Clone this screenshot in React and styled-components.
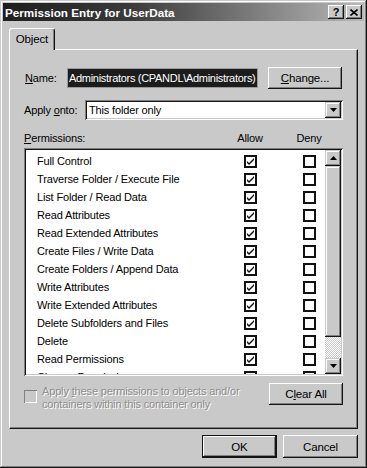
import styled, { createGlobalStyle } from 'styled-components';

const face = '#c9c9c9';
const shadow = '#808080';
const dark = '#141414';

const GlobalStyle = createGlobalStyle`
  html, body { margin: 0; padding: 0; background: ${face}; }
  body {
    font-family: "Liberation Sans", Arial, sans-serif;
    font-size: 11px;
    letter-spacing: -0.15px;
    color: #000;
  }
`;

const Window = styled.div`
  width: 367px;
  height: 468px;
  box-sizing: border-box;
  padding: 3px;
  background: ${face};
  box-shadow: inset -1px -1px ${dark}, inset 1px 1px ${face},
    inset -2px -2px ${shadow}, inset 2px 2px #fff;
  display: flex;
  flex-direction: column;
`;

const TitleBar = styled.div`
  height: 18px;
  display: flex;
  align-items: center;
  padding: 0 2px;
  background: linear-gradient(to right, #1e1e1e 0%, #3a3a3a 35%, #b8b8b8 100%);
  color: #fff;
  font-weight: bold;
  font-size: 11.7px;
  letter-spacing: 0;
`;

const TitleText = styled.div`
  flex: 1;
  white-space: nowrap;
`;

const TitleButton = styled.div`
  width: 16px;
  height: 14px;
  margin-left: ${p => (p.$gap ? 2 : 0)}px;
  box-sizing: border-box;
  background: ${face};
  box-shadow: inset -1px -1px ${dark}, inset 1px 1px #fff, inset -2px -2px ${shadow};
  display: flex;
  align-items: center;
  justify-content: center;
  color: #000;
  font-weight: bold;
  font-size: 11px;
  line-height: 1;
`;

const Body = styled.div`
  padding: 7px 6px 0 6px;
  display: flex;
  flex-direction: column;
`;

const TabStrip = styled.div`
  display: flex;
  height: 21px;
  position: relative;
  z-index: 1;
`;

const Tab = styled.div`
  width: 46px;
  height: 22px;
  box-sizing: border-box;
  background: ${face};
  border-left: 1px solid #fff;
  border-top: 1px solid #fff;
  border-right: 1px solid ${dark};
  border-radius: 3px 3px 0 0;
  box-shadow: inset -1px 0 ${shadow};
  display: flex;
  align-items: center;
  justify-content: center;
  padding-bottom: 2px;
  font-size: 11.5px;
`;

const Panel = styled.div`
  height: 380px;
  box-sizing: border-box;
  border-top: 1px solid #fff;
  border-left: 1px solid #fff;
  border-right: 1px solid ${dark};
  border-bottom: 1px solid ${dark};
  box-shadow: inset -1px -1px ${shadow};
  padding: 17px 14px 0 14px;
  display: flex;
  flex-direction: column;
`;

const Row = styled.div`
  display: flex;
  align-items: center;
  height: ${p => p.$h}px;
  margin-top: ${p => p.$mt || 0}px;
`;

const Label = styled.div`
  width: ${p => p.$w}px;
  padding-left: ${p => p.$pl || 0}px;
  box-sizing: border-box;
  white-space: nowrap;
`;

const U = styled.span`
  text-decoration: underline;
  text-underline-offset: 1px;
`;

const NameField = styled.div`
  width: 191px;
  height: 20px;
  box-sizing: border-box;
  border: 1px solid #9a9a9a;
  display: flex;
`;

const Selection = styled.div`
  flex: 1;
  background: #1c1c1c;
  color: #fff;
  display: flex;
  align-items: center;
  padding-left: 1px;
  letter-spacing: -0.3px;
  white-space: nowrap;
  overflow: hidden;
`;

const Button = styled.div`
  width: ${p => p.$w}px;
  height: ${p => p.$h}px;
  margin-left: ${p => p.$ml || 0}px;
  box-sizing: border-box;
  background: ${face};
  box-shadow: ${p =>
    p.$default
      ? `inset 0 0 0 1px ${dark}, inset -2px -2px ${dark}, inset 2px 2px #fff, inset -3px -3px ${shadow}`
      : `inset -1px -1px ${dark}, inset 1px 1px #fff, inset -2px -2px ${shadow}`};
  display: flex;
  align-items: center;
  justify-content: center;
  font-size: 11.5px;
`;

const Combo = styled.div`
  width: 258px;
  height: 20px;
  box-sizing: border-box;
  background: #fff;
  box-shadow: inset 1px 1px ${shadow}, inset -1px -1px #fff, inset 2px 2px ${dark}, inset -2px -2px ${face};
  padding: 2px;
  display: flex;
  align-items: center;
`;

const ComboText = styled.div`
  flex: 1;
  padding-left: 2px;
`;

const ArrowButton = styled.div`
  width: ${p => p.$w || 16}px;
  height: ${p => p.$h || 16}px;
  box-sizing: border-box;
  background: ${face};
  box-shadow: inset -1px -1px ${dark}, inset 1px 1px ${face}, inset -2px -2px ${shadow}, inset 2px 2px #fff;
  display: flex;
  align-items: center;
  justify-content: center;
  flex-shrink: 0;
`;

const HeaderRow = styled.div`
  display: grid;
  grid-template-columns: 192px 50px 50px;
  column-gap: 9px;
  height: 16px;
  align-items: center;
  margin-top: 10px;
`;

const Center = styled.div`
  text-align: center;
`;

const ListBox = styled.div`
  margin-top: 2px;
  height: 228px;
  box-sizing: border-box;
  background: #fff;
  box-shadow: inset 1px 1px ${shadow}, inset -1px -1px #fff, inset 2px 2px ${dark}, inset -2px -2px ${face};
  padding: 2px;
  display: flex;
`;

const ListRows = styled.div`
  flex: 1;
  padding: 2px 0 0 11px;
  overflow: hidden;
`;

const PermRow = styled.div`
  display: grid;
  grid-template-columns: 179px 50px 50px;
  column-gap: 9px;
  height: 18px;
  align-items: center;
  white-space: nowrap;
`;

const Box = styled.div`
  width: 13px;
  height: 13px;
  box-sizing: border-box;
  border: 2px solid #111;
  background: #fff;
  margin: 0 auto;
  display: flex;
  align-items: center;
  justify-content: center;
`;

const ScrollBar = styled.div`
  width: 16px;
  display: flex;
  flex-direction: column;
`;

const Thumb = styled.div`
  height: 171px;
  box-sizing: border-box;
  background: ${face};
  box-shadow: inset -1px -1px ${dark}, inset 1px 1px ${face}, inset -2px -2px ${shadow}, inset 2px 2px #fff;
`;

const Track = styled.div`
  flex: 1;
  background-color: #fff;
  background-image: linear-gradient(45deg, ${face} 25%, transparent 25%, transparent 75%, ${face} 75%),
    linear-gradient(45deg, ${face} 25%, transparent 25%, transparent 75%, ${face} 75%);
  background-size: 2px 2px;
  background-position: 0 0, 1px 1px;
`;

const BottomRow = styled.div`
  display: flex;
  justify-content: space-between;
  margin-top: 7px;
`;

const DisabledCheck = styled.div`
  display: flex;
  align-items: flex-start;
  padding-top: 4px;
`;

const DisabledBox = styled.div`
  width: 13px;
  height: 13px;
  box-sizing: border-box;
  margin-top: 3px;
  background: ${face};
  box-shadow: inset 1px 1px ${shadow}, inset -1px -1px #fff, inset 2px 2px ${face};
  flex-shrink: 0;
`;

const DisabledText = styled.div`
  margin-left: 5px;
  line-height: 13px;
  color: #8e8e8e;
  text-shadow: 1px 1px #fff;
  margin-top: -2px;
`;

const Footer = styled.div`
  display: flex;
  justify-content: flex-end;
  margin-top: 6px;
`;

const Check = () => (
  <svg width="9" height="9" viewBox="0 0 9 9">
    <path d="M1 4 L3 6 L8 1 L8 3 L3 8 L1 6 Z" fill="#111" />
  </svg>
);

const Arrow = ({ down }) => (
  <svg width="7" height="4" viewBox="0 0 7 4">
    <path d={down ? 'M0 0 H7 L3.5 4 Z' : 'M0 4 H7 L3.5 0 Z'} fill="#000" />
  </svg>
);

const permissions = [
  'Full Control',
  'Traverse Folder / Execute File',
  'List Folder / Read Data',
  'Read Attributes',
  'Read Extended Attributes',
  'Create Files / Write Data',
  'Create Folders / Append Data',
  'Write Attributes',
  'Write Extended Attributes',
  'Delete Subfolders and Files',
  'Delete',
  'Read Permissions',
  'Change Permissions',
];

export default function App() {
  return (
    <>
      <GlobalStyle />
      <Window>
        <TitleBar>
          <TitleText>Permission Entry for UserData</TitleText>
          <TitleButton>?</TitleButton>
          <TitleButton $gap>
            <svg width="8" height="7" viewBox="0 0 8 7">
              <path d="M0.5 0.5 L7.5 6.5 M7.5 0.5 L0.5 6.5" stroke="#000" strokeWidth="1.6" />
            </svg>
          </TitleButton>
        </TitleBar>
        <Body>
          <TabStrip>
            <Tab>Object</Tab>
          </TabStrip>
          <Panel>
            <Row $h={22}>
              <Label $w={43} $pl={1}><U>N</U>ame:</Label>
              <NameField>
                <Selection>Administrators (CPANDL\Administrators)</Selection>
              </NameField>
              <Button $w={74} $h={22} $ml={10}><span><U>C</U>hange...</span></Button>
            </Row>
            <Row $h={20} $mt={11}>
              <Label $w={61}>Apply <U>o</U>nto:</Label>
              <Combo>
                <ComboText>This folder only</ComboText>
                <ArrowButton $w={16} $h={16}><Arrow down /></ArrowButton>
              </Combo>
            </Row>
            <HeaderRow>
              <div><U>P</U>ermissions:</div>
              <Center>Allow</Center>
              <Center>Deny</Center>
            </HeaderRow>
            <ListBox>
              <ListRows>
                {permissions.map(p => (
                  <PermRow key={p}>
                    <div>{p}</div>
                    <Box><Check /></Box>
                    <Box />
                  </PermRow>
                ))}
              </ListRows>
              <ScrollBar>
                <ArrowButton><Arrow /></ArrowButton>
                <Thumb />
                <Track />
                <ArrowButton><Arrow down /></ArrowButton>
              </ScrollBar>
            </ListBox>
            <BottomRow>
              <DisabledCheck>
                <DisabledBox />
                <DisabledText>
                  Apply <U>t</U>hese permissions to objects and/or<br />
                  containers within this container only
                </DisabledText>
              </DisabledCheck>
              <Button $w={74} $h={22}><span>C<U>l</U>ear All</span></Button>
            </BottomRow>
          </Panel>
          <Footer>
            <Button $w={75} $h={23} $default>OK</Button>
            <Button $w={75} $h={23} $ml={6}>Cancel</Button>
          </Footer>
        </Body>
      </Window>
    </>
  );
}
